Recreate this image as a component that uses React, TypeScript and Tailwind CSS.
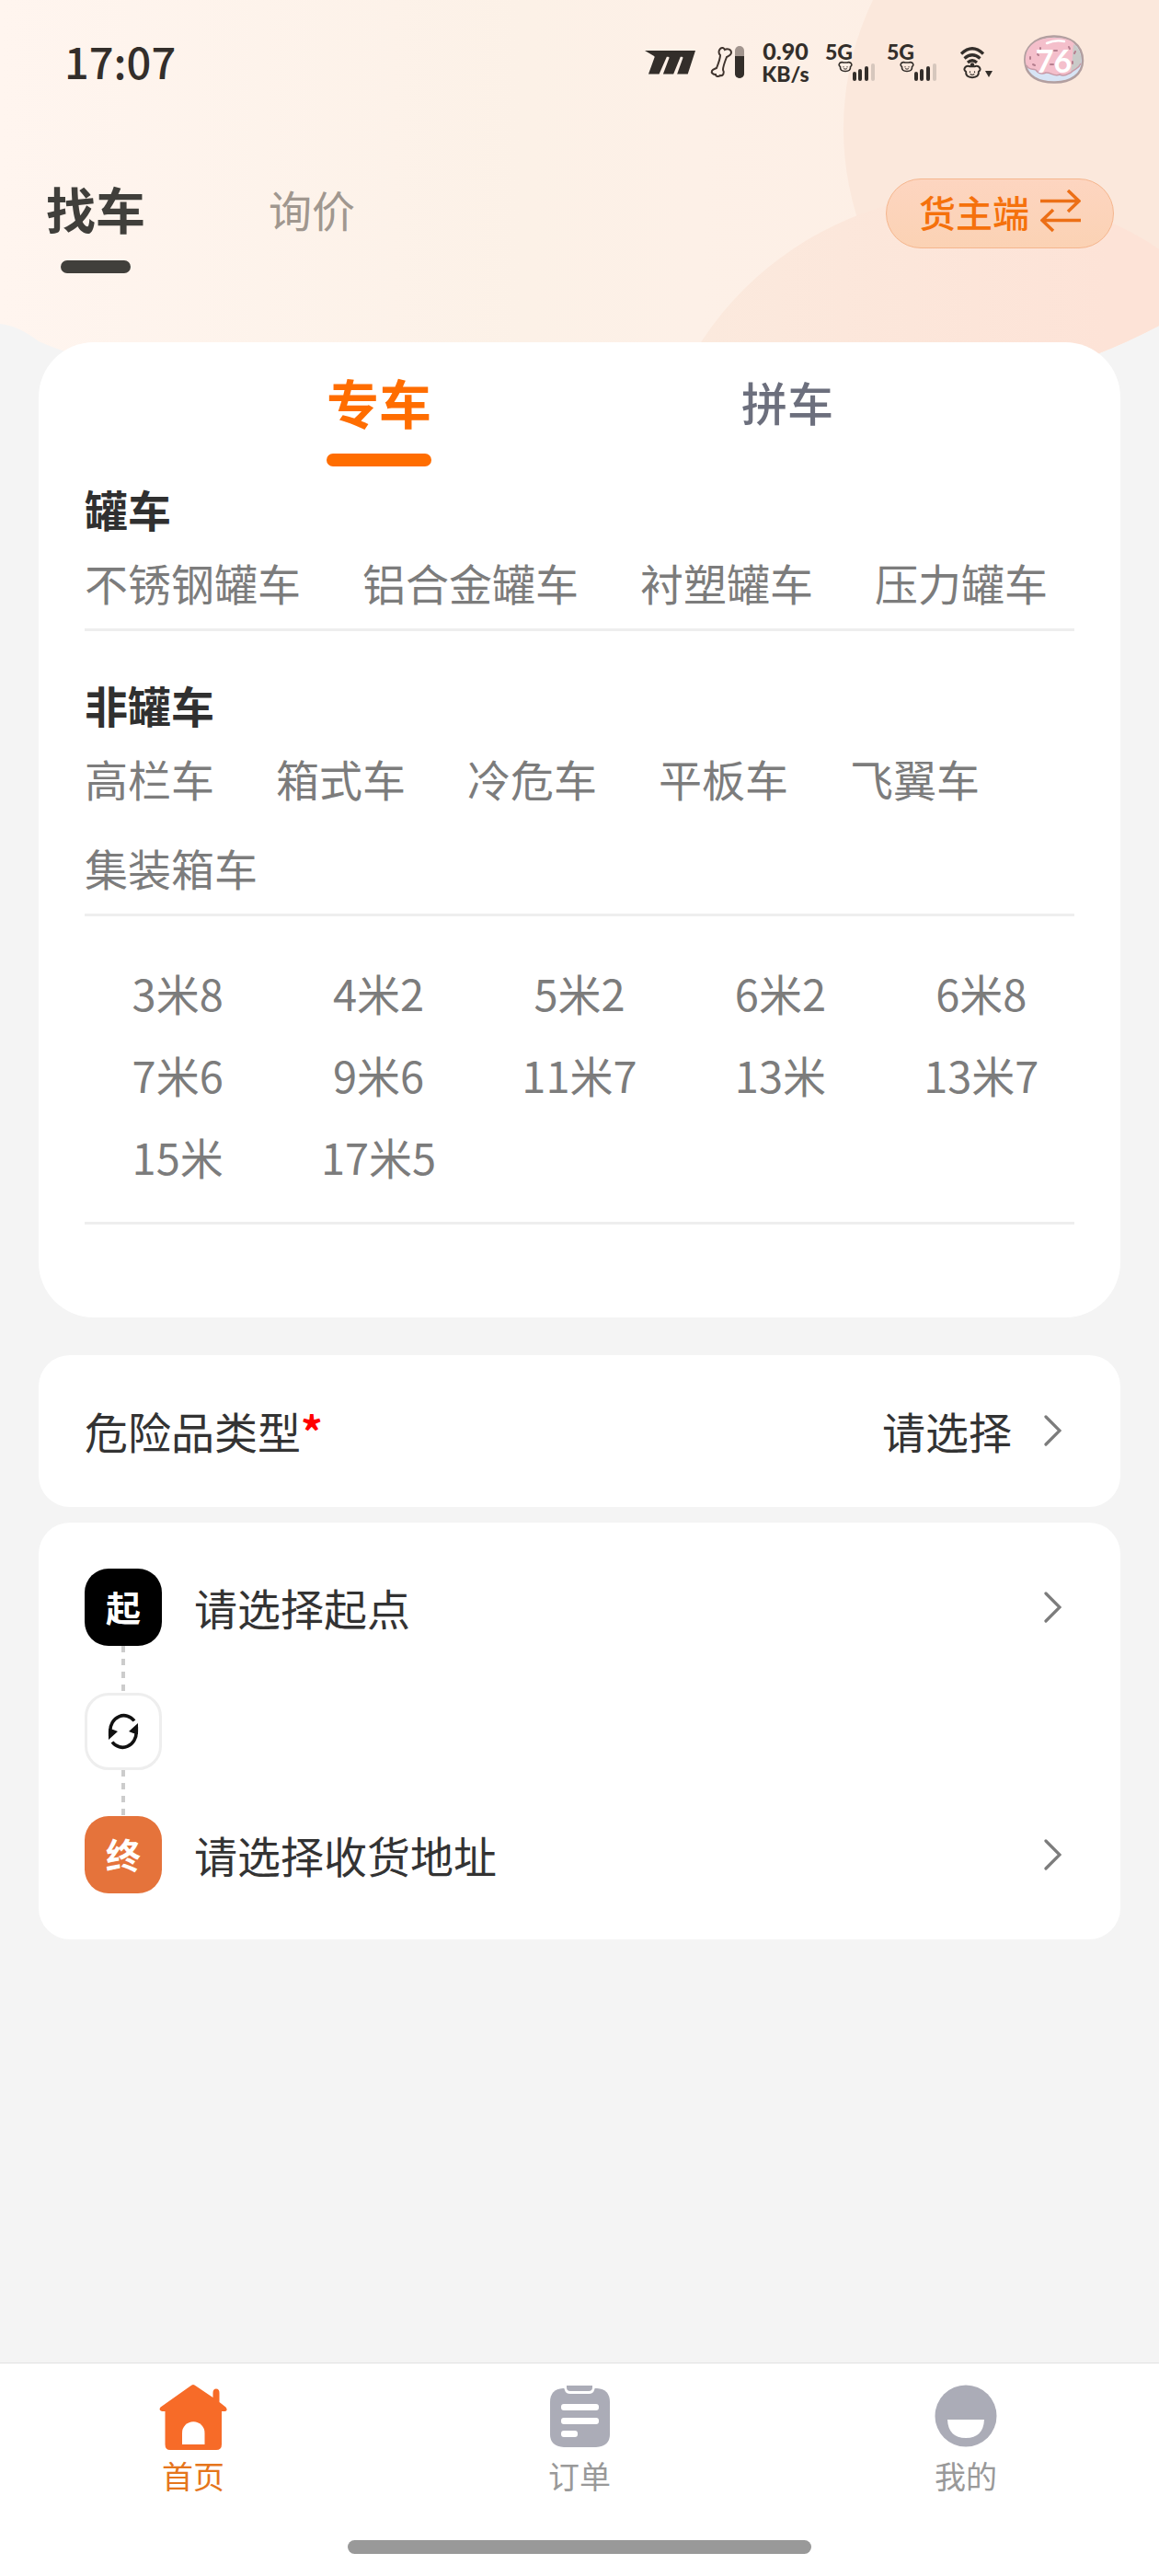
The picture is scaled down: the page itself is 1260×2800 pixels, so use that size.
import { ReactNode, useState } from "react";

const TANK_TYPES = ["不锈钢罐车", "铝合金罐车", "衬塑罐车", "压力罐车"];
const OTHER_TYPES = ["高栏车", "箱式车", "冷危车", "平板车", "飞翼车", "集装箱车"];
const LENGTHS = [
  "3米8",
  "4米2",
  "5米2",
  "6米2",
  "6米8",
  "7米6",
  "9米6",
  "11米7",
  "13米",
  "13米7",
  "15米",
  "17米5",
];

function HeaderBackground() {
  return (
    <svg
      className="absolute inset-x-0 top-0 -z-10 h-[400px] w-full"
      viewBox="0 0 1260 400"
      preserveAspectRatio="none"
      aria-hidden="true"
    >
      <defs>
        <linearGradient id="sky" x1="0" x2="1" y1="0" y2="0">
          <stop offset="0" stopColor="#fff5ef" />
          <stop offset="0.45" stopColor="#fcf1e7" />
          <stop offset="0.6" stopColor="#fdf0e7" />
          <stop offset="1" stopColor="#fdeee3" />
        </linearGradient>
        <linearGradient id="hill" x1="0" x2="1" y1="0" y2="0">
          <stop offset="0" stopColor="#fbeade" />
          <stop offset="0.7" stopColor="#fde3d7" />
        </linearGradient>
        <clipPath id="curve">
          <path d="M0 0H1260V354Q1228 371 1190 386Q1160 400 1120 400H140Q80 388 42 371Q20 354 0 352Z" />
        </clipPath>
      </defs>
      <g clipPath="url(#curve)">
        <rect width="1260" height="400" fill="url(#sky)" />
        <circle cx="1239" cy="140" r="322" fill="#fbe8dc" />
        <circle cx="1061" cy="567" r="357" fill="url(#hill)" />
      </g>
    </svg>
  );
}

function MotoIcon() {
  return (
    <svg className="h-[26px] w-[55px]" viewBox="0 0 166 78" fill="#332e2a" aria-hidden="true">
      <path d="M0 0H166L141 77H106L125 24Q126 20 121 20H117L94 77H60L80 24Q81 20 76 20H72L47 77H12L32 22Q33 18 28 16Z" />
    </svg>
  );
}

function BoneIcon() {
  return (
    <svg className="h-[36px] w-[38px]" viewBox="0 0 38 36" fill="none" aria-hidden="true">
      <path
        d="M11 3C13 1 15 2 16 4C19 2 23 4 23 7C23 10 20 11 18 12C16 17 14 22 14 26C16 29 14 33 11 32C9 34 6 33 6 31C3 31 1 29 2 27C3 25 5 25 7 24C9 19 11 14 11 10C9 8 9 5 11 3Z"
        stroke="#40342e"
        strokeWidth="2"
      />
      <rect x="27" y="0" width="10" height="35" rx="5" fill="#a2958e" />
      <path d="M27 11H37V30A5 5 0 0 1 27 30Z" fill="#332e2a" />
    </svg>
  );
}

function PuppyShape() {
  return (
    <g fill="none" stroke="#332e2a" strokeWidth="1.6" strokeLinecap="round" strokeLinejoin="round">
      <path d="M2 1.500Q4 0 6 1H10Q12 0 14 1.500Q16 4 13.500 5.500Q14 10.500 8 10.500Q2 10.500 2.500 5.500Q0 4 2 1.500Z" />
      <path d="M6 5.500V6M10 5.500V6M6.500 7.800Q8 8.800 9.500 7.800" strokeWidth="1" />
    </g>
  );
}

function Signal() {
  return (
    <div className="flex w-[54px] flex-col">
      <span className="text-[23px] leading-[20px] font-black">5G</span>
      <svg className="h-[24px] w-[54px]" viewBox="0 0 54 24" fill="#332e2a" aria-hidden="true">
        <g transform="translate(14 1)">
          <PuppyShape />
        </g>
        <rect x="30" y="12" width="4" height="10" rx="2" />
        <rect x="36" y="9" width="4" height="13" rx="2" />
        <rect x="43" y="6" width="4" height="16" rx="2" />
        <rect x="50" y="3" width="4" height="19" rx="2" fill="#d6c7bd" />
      </svg>
    </div>
  );
}

function WifiIcon() {
  return (
    <svg className="h-[36px] w-[37px]" viewBox="0 0 37 36" fill="none" aria-hidden="true">
      <g stroke="#332e2a" strokeWidth="3.200">
        <path d="M2 8.500Q14 -3 26 8.500" />
        <path d="M5.500 13.500Q14 6 22.500 13.500" />
        <path d="M9 18Q14 13.500 19 18" />
      </g>
      <circle cx="14" cy="20.500" r="2.200" fill="#332e2a" />
      <g transform="translate(4 21) scale(1.250)">
        <PuppyShape />
      </g>
      <path d="M28 27H36L32 34Z" fill="#332e2a" />
    </svg>
  );
}

function DonutBattery() {
  return (
    <div className="relative h-[53px] w-[67px]">
      <svg className="h-full w-full" viewBox="0 0 67 53" aria-hidden="true">
        <path
          d="M33 1.500C50 1 65 10 65 28C65 43 52 51.500 35 51.500C16 52 5 44 3 33C-1 15 13 2 33 1.500Z"
          fill="#d7e4f5"
          stroke="#b29fa0"
          strokeWidth="2.500"
        />
        <path
          d="M33 3C48 3 54 6 57 11C55 22 55 32 52 42C48 42 46 46 40 43C34 46 30 40 25 41C20 45 15 36 10 37C4 38 2 30 3 24C5 10 17 3 33 3Z"
          fill="#f4bfcb"
        />
        <path d="M55 10C62 15 64 22 63 30C62 38 57 35 52 41C54 30 54 20 55 10Z" fill="#c9cac8" />
        <path
          d="M4 33C7 39 11 36 14 38C18 43 21 43 25 41C30 40 34 46 40 43C46 46 49 42 52 41C57 36 60 38 63 31"
          fill="none"
          stroke="#c89aa7"
          strokeWidth="1.500"
        />
        <path d="M26 9Q35 5 45 7" fill="none" stroke="#fff" strokeWidth="2.500" strokeLinecap="round" />
        <path
          d="M19 14V16M8 24V26M11 32L13 33M50 13L51 15M57 18L56 20M54 29V31M34 17H37M30 32H33M16 21L17 22"
          stroke="#b57f8f"
          strokeWidth="2"
          strokeLinecap="round"
        />
      </svg>
      <span className="absolute inset-0 flex items-center justify-center pt-1 text-[34px] leading-none font-bold text-white">
        76
      </span>
    </div>
  );
}

function StatusBar() {
  return (
    <div className="flex h-[136px] items-center justify-between pr-[81px] pl-[70px] text-[#332e2a]">
      <span className="pb-1 text-[47px] leading-[64px] font-medium">17:07</span>
      <div className="flex items-center font-['Lato',sans-serif]">
        <MotoIcon />
        <div className="ml-4">
          <BoneIcon />
        </div>
        <div className="ml-[17px] flex w-[54px] flex-col items-center font-black">
          <span className="text-[25px] leading-[25px]">0.90</span>
          <span className="text-[23px] leading-[25px]">KB/s</span>
        </div>
        <div className="ml-4 flex gap-[13px]">
          <Signal />
          <Signal />
        </div>
        <div className="ml-[25px]">
          <WifiIcon />
        </div>
        <div className="ml-8 pb-2">
          <DonutBattery />
        </div>
      </div>
    </div>
  );
}

function SwapArrows() {
  return (
    <svg
      className="h-[52px] w-[44px]"
      viewBox="0 0 44 52"
      fill="none"
      stroke="#ec6f16"
      strokeWidth="3.500"
      aria-hidden="true"
    >
      <path d="M0 12.500H42M30 1L42 12.500L30 24" />
      <path d="M44 33.500H2M14 22L2 33.500L14 45" />
    </svg>
  );
}

function Chevron() {
  return (
    <svg className="h-[34px] w-[19px] shrink-0" viewBox="0 0 19 34" fill="none" aria-hidden="true">
      <path d="M2 2L17 17L2 32" stroke="#7c7c7c" strokeWidth="3.200" strokeLinecap="round" />
    </svg>
  );
}

function RefreshIcon() {
  return (
    <svg className="h-[40px] w-[34px]" viewBox="0 0 34 40" aria-hidden="true">
      <g fill="none" stroke="#111" strokeWidth="3.600">
        <path d="M29 8.500A15 17 0 0 0 2.700 20V25" />
        <path d="M5 31.500A15 17 0 0 0 31.300 20V15" />
      </g>
      <path d="M1 17V29L11 20L6 18ZM33 23V11L23 20L28 22Z" fill="#111" />
    </svg>
  );
}

function HomeIcon() {
  return (
    <svg className="h-[71px] w-[74px]" viewBox="0 0 74 71" fill="#f76b28" aria-hidden="true">
      <path d="M37 0Q38.500 0 40 1.500L58.500 14V9Q58.500 4.500 62 4.500Q65.500 4.500 65.500 9V19L72.500 24.500Q75 28 72 29H68V65Q68 71 62 71H12Q6.500 71 6.500 65V29H3Q-1 28 1.500 24.500L34 1.500Q35.500 0 37 0Z" />
      <path d="M25 65V52.500A12.200 12.200 0 0 1 49.500 52.500V65Z" fill="#fff" />
    </svg>
  );
}

function OrderIcon() {
  return (
    <svg className="h-[68px] w-[65px]" viewBox="0 0 65 68" fill="#abacb7" aria-hidden="true">
      <path d="M14 4H51Q65 5 65 19V54Q65 67 50 68H15Q0 67 0 54V19Q0 5 14 4Z" />
      <path d="M14 0H50L48 6Q47 10 42 10H22Q17 10 16 6Z" fill="#fff" />
      <path d="M18 1H46V3Q46 7 42 7H22Q18 7 18 3Z" />
      <g fill="#fff">
        <rect x="12" y="21" width="41" height="7" rx="3" />
        <rect x="12" y="36" width="41" height="7" rx="3" />
        <rect x="12" y="50" width="18" height="7" rx="3" />
      </g>
    </svg>
  );
}

function MineIcon() {
  return (
    <svg className="h-[68px] w-[68px]" viewBox="0 0 68 68" aria-hidden="true">
      <circle cx="34" cy="34" r="33.500" fill="#abacb7" />
      <path d="M14 38H54Q53 58 34 58Q15 58 14 38Z" fill="#fff" />
    </svg>
  );
}

interface OptionGroupProps {
  title: string;
  options: string[];
}

function OptionGroup({ title, options }: OptionGroupProps) {
  return (
    <section className="border-b-3 border-[#eee] pb-[18px]">
      <h2 className="mb-4 text-[47px] leading-[64px] font-bold text-[#303030]">{title}</h2>
      <div className="flex flex-wrap gap-x-[67px] gap-y-[33px]">
        {options.map((option) => (
          <button key={option} type="button" className="text-[47px] leading-[64px] text-[#7c7c7c]">
            {option}
          </button>
        ))}
      </div>
    </section>
  );
}

interface TabItemProps {
  label: string;
  icon: ReactNode;
  active?: boolean;
}

function TabItem({ label, icon, active }: TabItemProps) {
  return (
    <a href="#" className="flex flex-1 flex-col items-center">
      <span className="flex h-[75px] items-start">{icon}</span>
      <span
        className={
          active
            ? "text-[34px] leading-[48px] text-[#e5751c]"
            : "text-[34px] leading-[48px] text-[#999]"
        }
      >
        {label}
      </span>
    </a>
  );
}

export default function App() {
  const [shared, setShared] = useState(false);

  const tabText = (on: boolean) =>
    on
      ? "text-[57px] leading-[72px] font-bold text-[#ff6d00]"
      : "text-[50px] leading-[72px] font-medium text-[#6c6f7d]";
  const tabBar = (on: boolean) =>
    on ? "h-[14px] w-[114px] rounded-full bg-[#ff6d00]" : "h-[14px]";

  return (
    <div className="relative isolate flex min-h-screen flex-col bg-[#f4f4f4] font-['Noto_Sans_CJK_SC',sans-serif]">
      <HeaderBackground />

      <header>
        <StatusBar />
        <nav className="flex h-[236px] items-start justify-between pr-[49px] pl-[50px]">
          <div className="flex gap-[134px] pt-[55px]">
            <button type="button" className="flex flex-col items-center gap-5">
              <span className="text-[54px] leading-[72px] font-bold text-[#403f3b]">找车</span>
              <span className="h-[14px] w-[76px] rounded-full bg-[#403f3b]" />
            </button>
            <button type="button" className="flex flex-col">
              <span className="text-[47px] leading-[72px] text-[#a0978f]">询价</span>
            </button>
          </div>
          <button
            type="button"
            className="mt-[58px] flex h-[76px] items-center gap-[12px] rounded-full border border-[#f5b68e] bg-linear-to-b from-[#fdd5c0] to-[#fbd2b4] px-[35px] text-[40px] font-medium text-[#f5710c]"
          >
            <span className="pb-1 leading-[56px]">货主端</span>
            <SwapArrows />
          </button>
        </nav>
      </header>

      <main className="flex flex-1 flex-col px-[42px]">
        <div className="rounded-[60px] bg-white px-[50px] pt-[28px] pb-[101px]">
          <div className="grid grid-cols-2 pr-[90px] pl-[98px]">
            <button
              type="button"
              onClick={() => setShared(false)}
              className="flex flex-col items-center gap-[21px]"
            >
              <span className={tabText(!shared)}>专车</span>
              <span className={tabBar(!shared)} />
            </button>
            <button
              type="button"
              onClick={() => setShared(true)}
              className="flex flex-col items-center gap-[21px]"
            >
              <span className={tabText(shared)}>拼车</span>
              <span className={tabBar(shared)} />
            </button>
          </div>

          <div className="mt-[14px] flex flex-col gap-[48px]">
            <OptionGroup title="罐车" options={TANK_TYPES} />
            <OptionGroup title="非罐车" options={OTHER_TYPES} />
            <div className="border-b-3 border-[#eee] pt-[3px] pb-[39px]">
              <div className="-mx-2 grid grid-cols-5 gap-y-[25px]">
                {LENGTHS.map((length) => (
                  <button
                    key={length}
                    type="button"
                    className="text-[47px] leading-[64px] text-[#7c7c7c]"
                  >
                    {length}
                  </button>
                ))}
              </div>
            </div>
          </div>
        </div>

        <button
          type="button"
          className="mt-[41px] flex items-center justify-between rounded-[34px] bg-white pt-[50px] pr-[64px] pb-[51px] pl-[50px] text-[47px] leading-[64px] text-[#333]"
        >
          <span>
            危险品类型<span className="font-bold text-[#f00]">*</span>
          </span>
          <span className="flex items-center gap-[35px]">
            请选择
            <Chevron />
          </span>
        </button>

        <div className="mt-[17px] rounded-[34px] bg-white py-[50px] pr-[64px] pl-[50px] text-[47px] text-[#333]">
          <button type="button" className="flex w-full items-center gap-[35px] text-left">
            <span className="flex size-[84px] items-center justify-center rounded-[26px] bg-black pb-1 text-[38px] font-bold text-white">
              起
            </span>
            <span className="flex-1">请选择起点</span>
            <Chevron />
          </button>
          <div className="flex w-[84px] flex-col items-center">
            <span className="h-[51px] w-1 bg-[repeating-linear-gradient(to_bottom,#ccc_0_7px,transparent_7px_14px)]" />
            <button
              type="button"
              aria-label="交换"
              className="flex size-[84px] items-center justify-center rounded-[26px] border-3 border-[#eee] bg-white"
            >
              <RefreshIcon />
            </button>
            <span className="h-[50px] w-1 bg-[repeating-linear-gradient(to_bottom,#ccc_0_7px,transparent_7px_14px)]" />
          </div>
          <button type="button" className="flex w-full items-center gap-[35px] text-left">
            <span className="flex size-[84px] items-center justify-center rounded-[26px] bg-[#e5733b] pb-1 text-[38px] font-bold text-white">
              终
            </span>
            <span className="flex-1">请选择收货地址</span>
            <Chevron />
          </button>
        </div>
      </main>

      <footer className="border-t border-[#e2e2e2] bg-white pt-[23px] pb-6">
        <nav className="flex">
          <TabItem label="首页" icon={<HomeIcon />} active />
          <TabItem label="订单" icon={<OrderIcon />} />
          <TabItem label="我的" icon={<MineIcon />} />
        </nav>
        <div className="mx-auto mt-[46px] h-[15px] w-2/5 rounded-full bg-[#999]" />
      </footer>
    </div>
  );
}
